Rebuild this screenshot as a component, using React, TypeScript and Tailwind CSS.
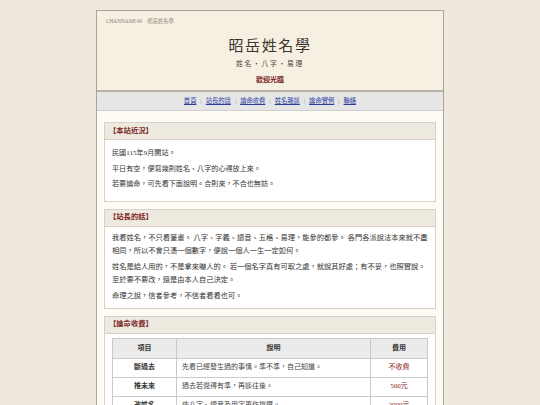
import React from "react";

const F = { fontFamily: '"Liberation Serif", "Noto Sans CJK TC", serif' };

function Section({ title, children }: { title: string; children: React.ReactNode }) {
  return (
    <div className="border border-[#d6d1c6] bg-white">
      <div className="h-[17px] flex items-center px-[4px] bg-[#eeeadf] border-b border-[#d6d1c6] text-[7.3px] font-bold text-[#7a1f1f]">
        {title}
      </div>
      {children}
    </div>
  );
}

export default function App() {
  const links = ["首頁", "站長的話", "論命收費", "姓名雜談", "論命實例", "聯絡"];
  const rows = [
    ["斷過去", "先看已經發生過的事情。準不準，自己知道。", "不收費"],
    ["推未來", "過去若覺得有準，再談往後。", "500元"],
    ["改姓名", "依八字、讀音及用字再作挑選。", "2000元"],
  ];
  return (
    <div style={F} className="w-[540px] h-[405px] overflow-hidden bg-[#efe9dd] pt-[10px]">
      <div className="mx-auto w-[348px] border border-[#aaa59b] bg-[#fdfbf4] h-[420px]">
        <div className="bg-[#f6f0e2] h-[81px] border-b-2 border-[#b8b3a8] flex flex-col">
          <div className="text-[5.3px] text-[#8a8478] pl-[9px] pt-[7px] leading-[6px]">CHANNAME49　昭岳姓名學</div>
          <div className="text-center text-[15px] tracking-[1.6px] text-[#3a342c] mt-[14px] leading-[16px]">昭岳姓名學</div>
          <div className="text-center text-[6.8px] tracking-[1.7px] text-[#4a443a] mt-[6px] leading-[8px]">姓名・八字・易理</div>
          <div className="text-center text-[7px] font-bold text-[#7a1f1f] mt-[8px] leading-[8px]">歡迎光臨</div>
        </div>
        <div className="h-[19px] bg-[#e6e6e6] border-b border-[#cfcfcf] flex items-center justify-center text-[6.3px]">
          {links.map((l, i) => (
            <React.Fragment key={l}>
              {i > 0 && <span className="text-[#999] mx-[4px]">|</span>}
              <span className="text-[#2a3ea0] underline">{l}</span>
            </React.Fragment>
          ))}
        </div>
        <div className="px-[7px] pt-[11px] flex flex-col gap-[7px]">
          <Section title="【本站近況】">
            <div className="px-[7px] pt-[6px] pb-[8px] text-[7.1px] text-[#333] leading-[15.5px]">
              <div>民國115年9月開站。</div>
              <div>平日有空，便寫幾則姓名、八字的心得放上來。</div>
              <div>若要論命，可先看下面說明。合則來，不合也無妨。</div>
            </div>
          </Section>
          <Section title="【站長的話】">
            <div className="px-[7px] pt-[5px] pb-[5px] text-[7.25px] text-[#333] leading-[13px] flex flex-col gap-[3px]">
              <p>我看姓名，不只看筆畫。 八字、字義、讀音、五格、易理，能參的都參。 各門各派說法本來就不盡相同，所以不會只憑一個數字，便說一個人一生一定如何。</p>
              <p>姓名是給人用的，不是拿來嚇人的。 若一個名字真有可取之處，就說其好處；有不妥，也照實說。 至於要不要改，還是由本人自己決定。</p>
              <p>命理之說，信者參考，不信者看看也可。</p>
            </div>
          </Section>
          <Section title="【論命收費】">
            <div className="px-[7px] pt-[4px] pb-[8px]">
              <table className="w-full border-collapse text-[7px] text-[#333]">
                <thead>
                  <tr className="bg-[#ebebeb] h-[20px]">
                    <th className="border border-[#c9c9c9] w-[64px] font-bold">項目</th>
                    <th className="border border-[#c9c9c9] font-bold">說明</th>
                    <th className="border border-[#c9c9c9] w-[57px] font-bold">費用</th>
                  </tr>
                </thead>
                <tbody>
                  {rows.map((r) => (
                    <tr key={r[0]} className="h-[19px]">
                      <td className="border border-[#c9c9c9] text-center font-bold">{r[0]}</td>
                      <td className="border border-[#c9c9c9] px-[5px] text-[#444]">{r[1]}</td>
                      <td className="border border-[#c9c9c9] text-center text-[#8b1a1a]">{r[2]}</td>
                    </tr>
                  ))}
                </tbody>
              </table>
            </div>
          </Section>
        </div>
      </div>
    </div>
  );
}
